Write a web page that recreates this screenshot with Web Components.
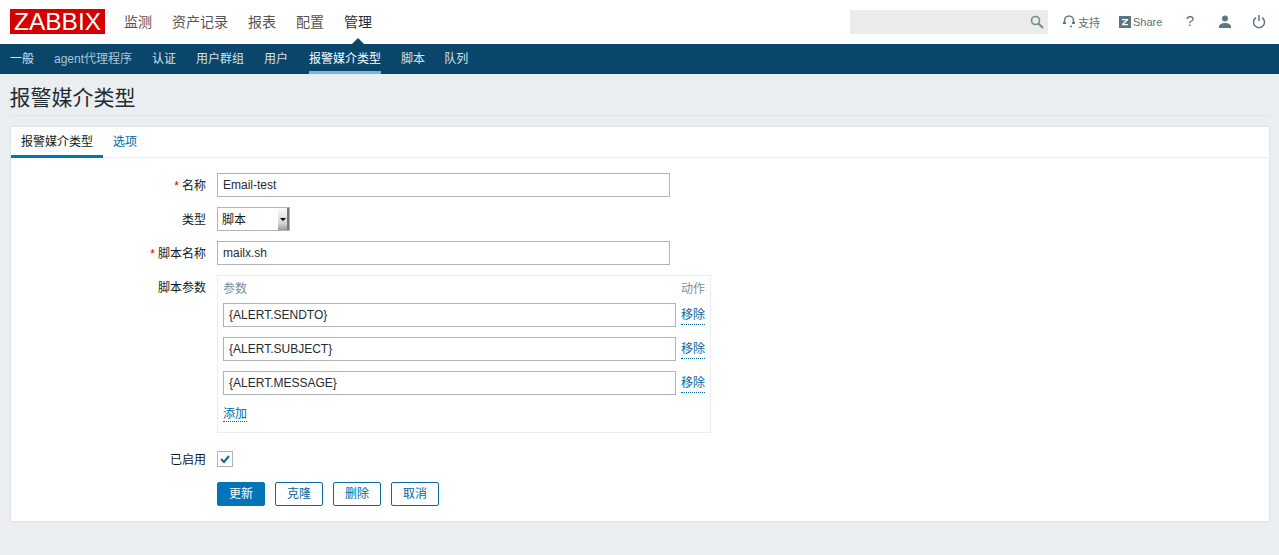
<!DOCTYPE html>
<html lang="zh">
<head>
<meta charset="utf-8">
<title>报警媒介类型</title>
<style>
  html, body { margin: 0; padding: 0; height: 555px; overflow: hidden; background: #ebeef0; }
  body { font: 12px "Liberation Sans", "Noto Sans CJK SC", sans-serif; color: #1f2c33; }
</style>
</head>
<body>
<zbx-topnav></zbx-topnav>
<zbx-subnav></zbx-subnav>
<zbx-title>报警媒介类型</zbx-title>
<zbx-card>
  <zbx-row label="名称" required><zbx-input value="Email-test"></zbx-input></zbx-row>
  <zbx-row label="类型"><zbx-select>脚本</zbx-select></zbx-row>
  <zbx-row label="脚本名称" required><zbx-input value="mailx.sh"></zbx-input></zbx-row>
  <zbx-row label="脚本参数">
    <zbx-params>
      <zbx-param value="{ALERT.SENDTO}"></zbx-param>
      <zbx-param value="{ALERT.SUBJECT}"></zbx-param>
      <zbx-param value="{ALERT.MESSAGE}"></zbx-param>
    </zbx-params>
  </zbx-row>
  <zbx-row label="已启用" class="check"><zbx-check></zbx-check></zbx-row>
  <zbx-row class="actions">
    <zbx-btn primary>更新</zbx-btn>
    <zbx-btn>克隆</zbx-btn>
    <zbx-btn>删除</zbx-btn>
    <zbx-btn>取消</zbx-btn>
  </zbx-row>
</zbx-card>

<script>
function define(name, html) {
  customElements.define(name, class extends HTMLElement {
    connectedCallback() {
      if (this.shadowRoot) return;
      const root = this.attachShadow({ mode: "open" });
      root.innerHTML = typeof html === "function" ? html(this) : html;
    }
  });
}

define("zbx-topnav", `
  <style>
    :host { display: flex; align-items: center; height: 44px; background: #fff; padding: 0 10px; box-sizing: border-box; position: relative; }
    .logo { width: 95px; height: 25px; margin-top: -1px; background: #d40000; color: #fff; font: 24.5px/26px "Liberation Sans", sans-serif; text-align: center; overflow: hidden; }
    nav { display: flex; margin-left: 9px; font-size: 14px; color: #555; }
    nav a { padding: 0 10px; line-height: 44px; margin-top: -1px; }
    nav a.on { color: #1f2c33; position: relative; }
    nav a.on::after { content: ""; position: absolute; left: 50%; margin-left: -7px; bottom: -1px; border: 7px solid transparent; border-top: 0; border-bottom-color: #0a466a; }
    .right { margin-left: auto; display: flex; align-items: center; font-size: 11px; color: #5f6f7a; }
    .search { width: 198px; height: 24px; background: #ebebeb; margin-right: 15px; display: flex; align-items: center; justify-content: flex-end; padding-right: 4px; box-sizing: border-box; }
    .item { display: flex; align-items: center; margin-top: -1px; }
    svg { display: block; }
  </style>
  <div class="logo">ZABBIX</div>
  <nav><a>监测</a><a>资产记录</a><a>报表</a><a>配置</a><a class="on">管理</a></nav>
  <div class="right">
    <div class="search">
      <svg width="14" height="14" viewBox="0 0 14 14" fill="none" stroke="#7b8a93" stroke-width="1.6"><circle cx="5.5" cy="5.5" r="4"/><path d="M8.5 8.5l4.5 4.5" stroke-width="2"/></svg>
    </div>
    <div class="item" style="width:56px">
      <svg width="12" height="13" viewBox="0 0 12 13" fill="none" stroke="#5f7582" stroke-width="1.5" style="margin-right:3px"><path d="M1.5 8V5.5a4.5 4.5 0 0 1 9 0V8"/><path d="M1.5 7v2M10.5 7v2" stroke-width="3"/><path d="M9 11.5H7"/></svg>支持
    </div>
    <div class="item" style="width:65px">
      <svg width="12" height="12" viewBox="0 0 12 12" style="margin-right:2px"><rect width="12" height="12" fill="#5f7582"/><path d="M3 3h6v1.3L5 8h4v1.2H3V8l4-3.7H3z" fill="#fff"/></svg>Share
    </div>
    <div style="width:34px;font-size:15px;text-align:center;margin-left:-11px;padding-right:1px;margin-top:-3px">?</div>
    <div style="width:34px;display:flex;justify-content:center;margin-top:-2px">
      <svg width="14" height="13" viewBox="0 0 14 13" fill="#5f7582"><circle cx="7" cy="3.5" r="3"/><path d="M1 13v-1.5C1 9.5 4 8 7 8s6 1.5 6 3.5V13z"/></svg>
    </div>
    <div style="width:33px;display:flex;justify-content:center;margin-right:-6px">
      <svg width="14" height="14" viewBox="0 0 14 14" fill="none" stroke="#5f7582" stroke-width="1.5"><path d="M4 2.6a5.5 5.5 0 1 0 6 0"/><path d="M7 0v6"/></svg>
    </div>
  </div>
`);

define("zbx-subnav", `
  <style>
    :host { display: flex; height: 30px; background: #0a466a; color: #fff; font-size: 12px; }
    a { padding: 0 10px; line-height: 30px; color: #d5e3ec; box-sizing: border-box; height: 30px; }
    a.dim { color: #a9c6d8; }
    a.on { color: #fff; border-bottom: 3px solid #76b8e0; padding: 0; margin: 0 10px 0 11px; }
    a:last-child { margin-left: -1px; }
  </style>
  <a>一般</a><a class="dim">agent代理程序</a><a>认证</a><a>用户群组</a><a>用户</a><a class="on">报警媒介类型</a><a>脚本</a><a>队列</a>
`);

define("zbx-title", `
  <style>
    :host { display: block; margin: 0 10px 10px; height: 42px; box-sizing: border-box; border-bottom: 1px solid #dfe4e7; }
    h1 { margin: 0 0 0 -.5px; font-weight: normal; font-size: 21px; line-height: 48px; color: #1f2c33; }
  </style>
  <h1><slot></slot></h1>
`);

define("zbx-card", `
  <style>
    :host { display: block; margin: 0 9px 0 10px; height: 396px; box-sizing: border-box; background: #fff; border: 1px solid #dfe4e7; }
    .tabs { display: flex; height: 31px; border-bottom: 1px solid #ebeef0; box-sizing: border-box; }
    .tabs a { padding: 0 10px; line-height: 30px; height: 31px; box-sizing: border-box; color: #0168a3; }
    .tabs a.on { color: #111c22; border-bottom: 3px solid #0275b8; }
    .body { display: flex; flex-direction: column; padding-top: 15px; gap: 10px; }
  </style>
  <div class="tabs"><a class="on">报警媒介类型</a><a>选项</a></div>
  <div class="body"><slot></slot></div>
`);

define("zbx-row", el => `
  <style>
    :host { display: flex; }
    :host(.check) { margin-top: 8px; margin-bottom: 5px; }
    .l { width: 195px; height: 24px; text-align: right; line-height: 26px; color: #111c22; flex: none; }
    :host(.check) .l { line-height: 18px; height: 16px; }
    .l i { color: #d40000; font-style: normal; margin-right: 3px; }
    .c { margin-left: 11px; display: flex; gap: 10px; }
  </style>
  <div class="l">${el.hasAttribute("required") ? "<i>*</i>" : ""}${el.getAttribute("label") || ""}</div>
  <div class="c"><slot></slot></div>
`);

define("zbx-input", el => `
  <style>
    :host { display: block; width: 453px; height: 24px; box-sizing: border-box; border: 1px solid #aeb4b8; padding: 0 5px; line-height: 22px; color: #1f2c33; background: #fff; }
  </style>${el.getAttribute("value")}
`);

define("zbx-select", `
  <style>
    :host { display: flex; width: 73px; height: 24px; box-sizing: border-box; border: 1px solid #aeb4b8; background: #fff; color: #111c22; }
    .t { flex: 1; padding-left: 4px; line-height: 24px; height: 22px; }
    .b { width: 11px; background: linear-gradient(#fafafa, #d5d5d5 70%, #999); border-right: 2px solid #777; box-sizing: border-box; display: flex; align-items: center; justify-content: center; }
    .b i { border: 3px solid transparent; border-top: 3px solid #000; border-bottom: 0; }
  </style>
  <div class="t"><slot></slot></div><div class="b"><i></i></div>
`);

define("zbx-params", `
  <style>
    :host { display: block; width: 494px; height: 158px; box-sizing: border-box; border: 1px solid #ebeef0; padding: 0 5px; }
    .h { display: flex; justify-content: space-between; height: 27px; line-height: 27px; color: #768d99; }
    .rows { display: flex; flex-direction: column; gap: 10px; }
    a { display: inline-block; margin-top: 13px; color: #0168a3; border-bottom: 1px dotted #0168a3; line-height: 13px; }
  </style>
  <div class="h"><span>参数</span><span>动作</span></div>
  <div class="rows"><slot></slot></div>
  <a>添加</a>
`);

define("zbx-param", el => `
  <style>
    :host { display: flex; gap: 5px; }
    .i { width: 453px; height: 24px; box-sizing: border-box; border: 1px solid #aeb4b8; padding: 0 5px; line-height: 22px; color: #1f2c33; }
    a { color: #0168a3; border-bottom: 1px dotted #0168a3; line-height: 15px; height: 16px; margin-top: 5px; }
  </style>
  <div class="i">${el.getAttribute("value")}</div><a>移除</a>
`);

define("zbx-check", `
  <style>
    :host { display: block; width: 16px; height: 16px; box-sizing: border-box; border: 1px solid #aeb4b8; background: #fff; }
    svg { display: block; }
  </style>
  <svg width="14" height="14" viewBox="0 0 14 14" fill="none" stroke="#0a6a9e" stroke-width="2"><path d="M3 7l3 3 5-6"/></svg>
`);

define("zbx-btn", el => `
  <style>
    :host { display: block; width: 48px; height: 24px; box-sizing: border-box; border: 1px solid ${el.hasAttribute("primary") ? "#0275b8" : "#0a6a9e"}; border-radius: 2px; text-align: center; line-height: 22px; background: ${el.hasAttribute("primary") ? "#0275b8" : "#fff"}; color: ${el.hasAttribute("primary") ? "#fff" : "#0168a3"}; }
  </style><slot></slot>
`);
</script>
</body>
</html>
